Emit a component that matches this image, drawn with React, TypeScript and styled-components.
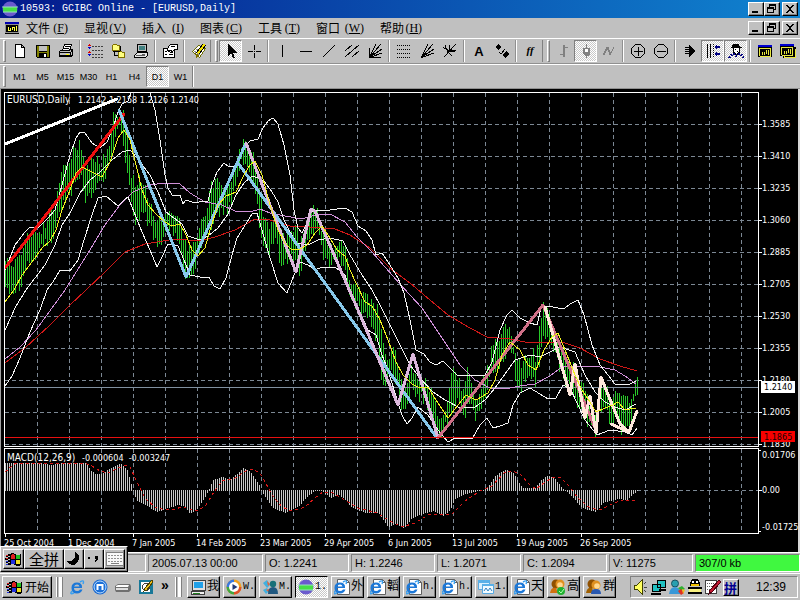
import React from 'react';
import styled, { createGlobalStyle, css } from 'styled-components';

const face = '#c0c0c0';
const uiFont = '"Liberation Mono", "Noto Sans CJK SC", monospace';
const sansFont = '"Liberation Sans", "Noto Sans CJK SC", sans-serif';
const chartFont = '"DejaVu Sans Condensed", "DejaVu Sans", sans-serif';
const dither = 'conic-gradient(#fff 25%, #c8c8c8 0 50%, #fff 0 75%, #c8c8c8 0) 0 0 / 2px 2px';

const GlobalStyle = createGlobalStyle`
  *, *::before, *::after { box-sizing: border-box; }
  body { margin: 0; background: ${face}; color: #000; }
  button { font: inherit; color: inherit; margin: 0; padding: 0; border: 0; background: none; }
`;

const raised = css`
  border: 1px solid;
  border-color: #fff #000 #000 #fff;
  box-shadow: inset -1px -1px 0 #808080;
`;

const sunken = css`
  border: 1px solid;
  border-color: #808080 #fff #fff #808080;
`;

const Page = styled.div`
  display: flex;
  flex-direction: column;
  min-height: 100vh;
  overflow: hidden;
  background: ${face};
  font: 10px/14px ${uiFont};
`;

const TitleBar = styled.header`
  display: flex;
  align-items: center;
  height: 18px;
  padding: 0 2px;
  color: #fff;
  background: linear-gradient(90deg, #04188c, #1084d0);
`;

const Title = styled.h1`
  flex: 1;
  margin: 0 0 0 2px;
  font: 10px/18px ${uiFont};
  white-space: pre;
`;

const WindowButtons = styled.div`
  display: flex;
  margin-left: auto;
`;

const WindowButton = styled.button<{ $gap?: boolean }>`
  width: 16px;
  height: 14px;
  margin-left: ${p => (p.$gap ? 2 : 0)}px;
  background: ${face};
  ${raised}
  svg { display: block; }
`;

const MenuBar = styled.nav`
  display: flex;
  align-items: center;
  height: 20px;
  padding: 0 2px 0 5px;
`;

const MenuItems = styled.div`
  display: flex;
  gap: 16px;
  margin-left: 7px;
`;

const MenuItem = styled.button`
  display: flex;
  font: 12px/16px "Noto Sans CJK SC", sans-serif;
  white-space: nowrap;
`;

const Key = styled.span<{ $wide: boolean }>`
  width: ${p => (p.$wide ? 24 : 18)}px;
  font-family: "Liberation Serif", serif;
  text-align: right;
`;

const ToolBar = styled.div<{ $height: number }>`
  display: flex;
  align-items: stretch;
  height: ${p => p.$height}px;
  padding: 1px 0 1px 3px;
  border-top: 1px solid #fff;
  border-bottom: 1px solid #909090;
`;

const Grip = styled.div<{ $lead?: boolean }>`
  flex: none;
  width: ${p => (p.$lead ? 9 : 5)}px;
  padding-left: ${p => (p.$lead ? 4 : 0)}px;
  border-left: ${p => (p.$lead ? '1px solid #808080' : '0')};
  &::before {
    content: '';
    display: block;
    width: 3px;
    height: 100%;
    border: 1px solid;
    border-color: #fff #808080 #808080 #fff;
  }
`;

const Divider = styled.div`
  flex: none;
  width: 6px;
  padding-left: 2px;
  &::before {
    content: '';
    display: block;
    width: 2px;
    height: 100%;
    border-left: 1px solid #909090;
    border-right: 1px solid #fff;
  }
`;

const ToolButton = styled.button<{ $pressed?: boolean }>`
  flex: none;
  display: flex;
  align-items: center;
  justify-content: center;
  width: 23px;
  font: 9px/12px ${sansFont};
  border: 1px solid transparent;
  ${p => p.$pressed && css`
    background: ${dither};
    ${sunken}
  `}
`;

const PeriodEnd = styled.div`
  width: 2px;
  border-left: 1px solid #808080;
  border-right: 1px solid #fff;
`;

const ChartPane = styled.main`
  background: #000;
  border-left: 1px solid #a0a0a0;
  border-right: 2px solid #d8d8d8;
  svg { display: block; width: 100%; height: auto; }
`;

const StatusBar = styled.footer`
  position: relative;
  display: grid;
  grid-template-columns: 142px 115px 84px 84px 84px 84px 84px 1fr;
  gap: 2px;
  height: 21px;
  padding: 1px 0 2px 4px;
  border-top: 1px solid #fff;
  margin-top: -1px;
`;

const StatusCell = styled.div<{ $hot?: boolean }>`
  padding-left: 3px;
  font: 11px/16px ${sansFont};
  white-space: nowrap;
  background: ${p => (p.$hot ? '#40f840' : face)};
  ${sunken}
`;

const ImeBar = styled.div`
  position: absolute;
  left: 0;
  bottom: 1px;
  display: flex;
  height: 26px;
  padding: 2px;
  background: ${face};
  ${raised}
`;

const ImeButton = styled.button<{ $w: number }>`
  display: flex;
  align-items: center;
  justify-content: center;
  width: ${p => p.$w}px;
  font: 15px/18px "Noto Sans CJK SC", sans-serif;
  white-space: nowrap;
  ${raised}
`;

const TaskBar = styled.div`
  display: flex;
  align-items: center;
  height: 27px;
  padding: 1px 2px 1px;
  border-top: 1px solid #fff;
`;

const StartButton = styled.button`
  display: flex;
  align-items: center;
  gap: 2px;
  width: 50px;
  height: 22px;
  padding-left: 3px;
  font: 12px/16px "Noto Sans CJK SC", sans-serif;
  white-space: nowrap;
  ${raised}
`;

const TaskGrip = styled.div`
  width: 6px;
  height: 20px;
  margin: 0 3px 0 4px;
  border-left: 1px solid #fff;
  border-right: 3px solid #fff;
  box-shadow: inset 1px 0 0 #808080, 1px 0 0 #808080;
`;

const QuickLaunch = styled.div`
  display: flex;
  align-items: center;
  gap: 7px;
  width: 106px;
  padding-left: 4px;
`;

const More = styled.button`
  align-self: flex-start;
  font: bold 14px/12px ${sansFont};
`;

const Tasks = styled.div`
  display: flex;
  gap: 3px;
  margin-left: 3px;
`;

const TaskButton = styled.button<{ $active?: boolean; $latin: boolean }>`
  display: flex;
  align-items: center;
  gap: 1px;
  width: 33px;
  height: 22px;
  padding-left: 2px;
  overflow: hidden;
  font: ${p => (p.$latin ? '10px' : '12px')}/16px ${uiFont};
  white-space: nowrap;
  svg { flex: none; }
  ${raised}
  ${p => p.$active && css`
    background: ${dither};
    border-color: #000 #fff #fff #000;
    box-shadow: none;
  `}
`;

const Tray = styled.div`
  display: flex;
  align-items: center;
  gap: 2px;
  width: 168px;
  height: 22px;
  margin-left: auto;
  padding-left: 2px;
  ${sunken}
`;

const Clock = styled.time`
  margin-left: auto;
  padding-right: 11px;
  font: 12px/14px ${sansFont};
`;

/* ---------- icons ---------- */

const Ico = ({ children, w = 16, h = 16, smooth }: { children: React.ReactNode; w?: number; h?: number; smooth?: boolean }) => (
  <svg width={w} height={h} viewBox={`0 0 ${w} ${h}`} fill="none" stroke="none" shapeRendering={smooth ? 'auto' : 'crispEdges'} aria-hidden="true">
    {children}
  </svg>
);

const P = ({ d, c = '#000', f }: { d: string; c?: string; f?: string }) => <path d={d} stroke={c} fill={f ?? 'none'} />;

const Globe = () => (
  <Ico smooth>
    <circle cx="8" cy="8" r="7.5" fill="#6a5acd" />
    <path d="M1 6h14v5H1z" fill="#45e045" />
    <path d="M0 6h16M1 11h14" stroke="#9be0c0" />
  </Ico>
);

const ChartDoc = () => (
  <Ico w={14} h={14}>
    <path d="M0 1h14v12H0z" fill="#000" />
    <path d="M0 1h14v2H0z" fill="#0000b0" />
    <path d="M1 3.500h12M1 11.500h12M.5 3v9M13.500 3v9" stroke="#909090" />
    <path d="M3.500 9V6M5.500 10V7M7.500 9V6M9.500 10V6M11.500 10V5M3 9.500h2M8 6.500h2" stroke="#ffff40" />
  </Ico>
);

const Flag = () => (
  <Ico w={17} h={16}>
    <path d="M1 5h2M0 8h3M1 11h2M3 4h2M3 7h2M3 10h2M3 13h2" stroke="#000" strokeWidth="2" />
    <path d="M5 3q3-2 5 0t6 0v11q-3 2-6 0t-5 0z" fill="#000" />
    <path d="M6 4q2-2 4 0v4q-2-1-4 0z" fill="#e02020" />
    <path d="M11 4q2 1 4 0v4q-2 1-4 0z" fill="#20c020" />
    <path d="M6 9q2-1 4 0v4q-2-1-4 0z" fill="#2030e0" />
    <path d="M11 9q2 1 4 0v4q-2 1-4 0z" fill="#f0e020" />
    <path d="M1 4h2M1 7h2" stroke="#e02020" /><path d="M1 10h2M1 13h2" stroke="#2030e0" />
  </Ico>
);

const winIcons: Record<string, React.ReactNode> = {
  min: <Ico w={14} h={12}><path d="M3 8h6v2H3z" fill="#000" /></Ico>,
  restore: <Ico w={14} h={12}><path d="M4 1h7v6H9V6h1V3H5v1H4zM2 4h7v6H2zM3 6v3h5V6z" fill="#000" fillRule="evenodd" /></Ico>,
  close: <Ico w={14} h={12}><path d="M3 2h2v1h1v1h2V3h1V2h2v1h-1v1H9v1H8v2h1v1h1v1h1v1H9V9H8V8H6v1H5v1H3V9h1V8h1V7h1V5H5V4H4V3H3z" fill="#000" /></Ico>,
};

const fan = <path d="M2.5 14.500L14 1M2.500 14.500L15 6M2.500 14.500L9 1M2.500 14.500L15 10" stroke="#000" />;

const I: Record<string, React.ReactNode> = {
  new: <Ico><path d="M3.500 1.500h6l3 3v10h-9zM9.500 1.500v3h3" fill="#fff" stroke="#000" /></Ico>,
  save: <Ico><path d="M1 2h14v13H2l-1-1z" fill="#000" /><path d="M2 3h2v6h8V3h2v11h-2v-4H4v4H2z" fill="#808000" /><path d="M4 3h8v5H4z" fill="#c0c0c0" /><path d="M9 11h2v3H9z" fill="#fff" /></Ico>,
  print: <Ico><path d="M1.500 8.500l3-2h10l-2 3v4h-11z" fill="#c0c0c0" stroke="#000" /><path d="M4.500 7.500l2-6h7l-2 6z" fill="#fff" stroke="#000" /><path d="M7 3.500h5M6 5.500h5M1 9.500h12M1 12.500h11M14.500 7v5l-2 2" stroke="#000" /><path d="M8 11h3v1H8z" fill="#ffff00" /></Ico>,
  market: <Ico><path d="M5 3.500h11M5 7.500h11M5 11.500h11M5 14.500h11" stroke="#404040" strokeDasharray="2 1" /><path d="M2 1h1v1h1v1H1V2h1zM2 8h1v1h1v1H1V9h1z" fill="#e00000" /><path d="M1 4h3v1H3v1H2V5H1zM1 11h3v1H3v1H2v-1H1z" fill="#0000d0" /></Ico>,
  nav: <Ico><path d="M2.500 2.500l1-1h3l1 1h2v5h-7zM8.500 9.500l1-1h2l1 1h2v5h-6z" fill="#ffff80" stroke="#807000" /><path d="M4.500 8v4.500H8M10 7.500V3M3 8.500h7" stroke="#000" /></Ico>,
  terminal: <Ico><path d="M4.500 1.500h9v7h-9z" fill="#c0c0c0" stroke="#000" /><path d="M6 3h6v4H6z" fill="#408080" /><path d="M1.500 12.500l3-3h10v3l-2 2h-11z" fill="#e8e8e8" stroke="#000" /><path d="M3 12.500h9M9 11.500h3" stroke="#606060" /></Ico>,
  props: <Ico><path d="M1.500 5.500h11v9h-11z" fill="#fff" stroke="#000" /><path d="M6.500 3.500l2-2h7v5h-3l-2 2-2-1-2 1-1-2z" fill="#fff" stroke="#000" /><path d="M3 8.500h2M3 11.500h2M7 11.500h4M8 9.500h3M9 3.500h4" stroke="#000" /></Ico>,
  wand: <Ico><path d="M1.500 8.500l6-6 7 3-6 9z" fill="#fff" stroke="#707000" /><path d="M3 8l6 4M5 6l6 3" stroke="#909090" /><path d="M15 2L8 11M12 1L5 10" stroke="#000" /><path d="M13.500 1.500l-7 9" stroke="#f0e000" strokeWidth="2" /><path d="M5 11l3 1-3 3z" fill="#807000" /></Ico>,
  cursor: <Ico><path d="M5 1v12l3-3 2 5h2l-2-5h4z" fill="#000" /></Ico>,
  cross: <Ico><path d="M8.500 2v5M8.500 10v5M2 8.500h5M10 8.500h5" stroke="#000" /><path d="M8 8h1v1H8z" fill="#000" /></Ico>,
  vline: <Ico><P d="M7.500 2v12" /></Ico>,
  hline: <Ico><P d="M2 8.500h12" /></Ico>,
  trend: <Ico><P d="M2 14L14 2" /></Ico>,
  channel: <Ico><P d="M1 8l7-6M1 14L15 2M8 14l7-6" /></Ico>,
  fan: <Ico>{fan}<P d="M3 14.500h11M2.500 14V5" /></Ico>,
  fibo: <Ico>{[2, 6, 10, 14].map(y => <path key={y} d={`M1 ${y}.500h14`} stroke="#000" strokeDasharray="1 1" />)}</Ico>,
  gann: <Ico>{fan}</Ico>,
  fork: <Ico><P d="M2 14L14 1M1 4q4 4 12 5M3 2q1 6 7 11M7 2v5h7" /></Ico>,
  text: <Ico smooth><text x="8" y="13" textAnchor="middle" fontSize="13" fontWeight="bold" fontFamily="Liberation Sans, sans-serif" fill="#000">A</text></Ico>,
  arrows: <Ico><path d="M4 1l3 3-3 3-3-3zM12 8l3 3-4 4-3-3z" fill="#000" /><P d="M5 9l2 2 4-5" /></Ico>,
  ff: <Ico smooth><text x="7" y="11" textAnchor="middle" fontSize="11" fontStyle="italic" fontWeight="bold" fontFamily="Liberation Serif, serif" fill="#000">ff</text></Ico>,
  bars: <Ico><path d="M8 2h2v12H8zM10 4h3v1h-3zM5 11h3v1H5z" fill="#808080" /></Ico>,
  candle: <Ico><path d="M8 1h1v14H8z" fill="#808080" /><path d="M5 5h7v6l-2 2H7l-2-2z" fill="#808080" /><path d="M7 6h3v3H7z" fill="#fff" /></Ico>,
  line: <Ico><P c="#808080" d="M2 12l4-8 3 8 4-8M3 12l4-8 3 8" /></Ico>,
  zoomin: <Ico><P d="M5.500 1.500h5l4 4v5l-4 4h-5l-4-4v-5zM4 8.500h9M8.500 4v9" /></Ico>,
  zoomout: <Ico><P d="M5.500 1.500h5l4 4v5l-4 4h-5l-4-4v-5zM4 8.500h9" /></Ico>,
  scroll: <Ico><path d="M7 2l7 6-7 6z" fill="#000" /><P d="M3 4.500h4M3 6.500h4M3 8.500h4M3 10.500h4" /></Ico>,
  shift: <Ico><P d="M2.500 1v14M5.500 1v14" /><path d="M8.500 1v14" stroke="#000" strokeDasharray="1 1" /><path d="M9 4l3-3v2h3v2h-3v2zM9 11l3-3v2h3v2h-3v2z" fill="#000080" /></Ico>,
  expert: <Ico><path d="M5 1h6l1 3h2v1H3V4h1z" fill="#000" /><path d="M5.500 5v4l2 2h2l2-2V5" fill="#fff" stroke="#000" /><path d="M7 6h1v1H7zM9 8h1v1H9z" fill="#000" /><path d="M1 15l2-3 3-1 2 2 3-2 3 1 2 3" stroke="#000080" strokeWidth="2" strokeDasharray="2 1" /></Ico>,
  win: <Ico w={14} h={14}><path d="M0 1h14v12H0z" fill="#000" /><path d="M0 1h14v2H0z" fill="#0000d0" /><P c="#e8e840" d="M1.500 12V4.500h11v7.500h-11M4.500 11V8M6.500 8v3M8.500 6v4M10.500 6v5" /></Ico>,
  wins: <Ico w={16}><path d="M3 4h13v11H3z" fill="#000" /><path d="M4.500 5v9h11V6" stroke="#e8e840" /><path d="M0 1h14v12H0z" fill="#000" /><path d="M0 1h14v2H0z" fill="#0000d0" /><P c="#e8e840" d="M1.500 12V4.500h11v7.500h-11M4.500 11V8M6.500 8v3M8.500 6v4M10.500 6v5" /></Ico>,
};

const IeLetter = () => (
  <>
    <path d="M13 9H5q0 3 3 3 2 0 3-1.500h2.500Q12 14.500 8 14.500q-5.500 0-5.500-5.500T8 3.500q5.500 0 5 5.500M5 7.500h5.500Q10 5.500 8 5.500t-3 2" fill="#1c78d8" fillRule="evenodd" />
    <path d="M3 12q-3 4 2 2M11 3q5-3 3 2" stroke="#3aa0f0" strokeWidth="1.500" />
  </>
);

const T: Record<string, React.ReactNode> = {
  ie: <Ico smooth><IeLetter /></Ico>,
  m: <Ico smooth><circle cx="8" cy="8" r="7.500" fill="#1868d0" /><circle cx="8" cy="8" r="6" stroke="#bfe0ff" fill="#1c70d8" /><path d="M5.500 11V6h5v5M8 6" stroke="#fff" strokeWidth="2" /></Ico>,
  drive: <Ico smooth><path d="M0 7l3-2h12l1 2v4l-2 2H1l-1-2z" fill="#707070" /><path d="M1 7l2-1h11l-1 2H1z" fill="#fff" /><path d="M1 9h12v2H1z" fill="#e0e0e0" /></Ico>,
  note: <Ico><path d="M1 1h14v14H1z" fill="#187898" /><path d="M3 3h9v10H3z" fill="#fff" /><circle cx="8" cy="8" r="3.500" stroke="#404040" /><path d="M14 1L7 9l-1 3 3-1 6-8z" fill="#e8c020" stroke="#504000" /></Ico>,
  pc: <Ico><path d="M2 1h13v10H2z" fill="#e0e0e0" stroke="#404040" /><path d="M4 3h9v6H4z" fill="#20a0e8" /><path d="M1 12h13v3H1z" fill="#f0f0f0" stroke="#404040" /><path d="M3 14h7" stroke="#208020" /></Ico>,
  media: <Ico smooth><circle cx="8" cy="8" r="7.500" fill="#f0a020" /><path d="M8 .5A7.500 7.500 0 0 0 .5 8H8z" fill="#3878e0" /><path d="M.5 8A7.500 7.500 0 0 0 8 15.500V8z" fill="#40a840" /><path d="M8 15.500A7.500 7.500 0 0 0 15.500 8H8z" fill="#e05028" /><circle cx="8" cy="8" r="5" fill="#fff" /><path d="M6.500 5l5 3-5 3z" fill="#203878" /></Ico>,
  msn: <Ico smooth><path d="M1 4l4-3 3 5-3 3zM1 11l4-2 2 3-3 3z" fill="#40b0e0" /><path d="M5 2l3 3-2 2zM4 11l3-1 1 4z" fill="#f06030" /><circle cx="11" cy="5" r="3.200" fill="#187078" /><path d="M6 15q0-7 5-7t5 7z" fill="#205880" /></Ico>,
  globe: <Globe />,
  page: <Ico smooth><path d="M3.500.500h9l3 3v12h-12z" fill="#fff" stroke="#606060" /><path d="M12.500.500v3h3" stroke="#606060" /><g transform="translate(-2 0)"><IeLetter /></g></Ico>,
  windows: <Ico smooth><path d="M.5 1.500h11v9H.5z" fill="#d8f0ff" stroke="#58a8e0" /><path d="M0 1h12v3H0z" fill="#58b0e8" /><path d="M4.500 5.500h11v9h-11z" fill="#f0faff" stroke="#58a8e0" /><path d="M4 5h12v2H4z" fill="#58b0e8" /><path d="M6 12l2-3 2 3 2-3 2 3" stroke="#3080c0" /></Ico>,
  users: <Ico smooth><circle cx="6" cy="5" r="4.500" fill="#905000" /><circle cx="10" cy="6" r="4.500" fill="#e09020" /><circle cx="11" cy="7" r="2.800" fill="#ffd890" /><path d="M0 14q1-6 6-5l2 5z" fill="#a06000" /><path d="M5 15q0-5 5-5t5 5z" fill="#2858b0" /></Ico>,
  usersOn: <Ico smooth><circle cx="6" cy="5" r="4.500" fill="#905000" /><circle cx="10" cy="5" r="4.500" fill="#e09020" /><circle cx="10" cy="6" r="2.800" fill="#ffd890" /><path d="M0 14q1-6 6-5l2 5z" fill="#d07010" /><circle cx="11" cy="12" r="4" fill="#20b030" /><path d="M9 12l2 2 3-4" stroke="#b0ffb0" /></Ico>,
  sound: <Ico><path d="M1 6h3l5-5v14l-5-5H1z" fill="#ffff60" stroke="#404000" /><path d="M11 5l2-2M11 8.500h3M11 11l2 2" stroke="#404040" /></Ico>,
  net: <Ico><path d="M6.500 1.500h8v7h-8zM1.500 5.500h8v7h-8z" fill="#20c0c0" stroke="#000" /><path d="M0 14.500h10M8 10.500h7" stroke="#000" strokeWidth="2" /></Ico>,
  buddy: <Ico smooth><circle cx="6" cy="4.500" r="3.500" fill="#28a0b0" stroke="#185060" /><path d="M0 15q1-7 6-7t6 7z" fill="#3898d8" /><path d="M9 9l4-2 3 3-4 2z" fill="#30b030" /><path d="M9 12l3-2 3 4-3 2z" fill="#e03020" /><path d="M13 10l3 1-2 4z" fill="#f0c020" /></Ico>,
  penguin: <Ico><path d="M5 0h6l2 4v3H3V4z" fill="#000" /><path d="M5 2h2v2H5zM9 2h2v2H9z" fill="#fff" /><path d="M4 5h8v2H4z" fill="#f0c000" /><path d="M1 8h14v2H1zM1 13h14v2H1z" fill="#000" /><path d="M2 10h12v3H2z" fill="#f8f080" /></Ico>,
  pad: <Ico><path d="M.5 1.500h11v13H.5z" fill="#fff" stroke="#404040" /><path d="M2 4.500h8M2 7.500h7M2 10.500h5" stroke="#606060" strokeDasharray="1 1" /><path d="M14 1l2 2-9 10-3 2 1-4z" fill="#c01830" stroke="#500010" /></Ico>,
  moon: <Ico><path d="M9 1q5 2 4 7t-6 6q-4 0-6-4 5 1 7-2t1-7" fill="#000" /></Ico>,
  dots: <Ico><path d="M2 6h2v2H2zM9 5h3v3l-2 3H9l1-3H9z" fill="#000" /></Ico>,
  keys: <Ico w={18} h={14}><path d="M.5.500h17v13H.5z" fill="#f8f8f8" stroke="#808080" />{[3, 6, 9].map(y => <path key={y} d={`M2 ${y}.500h14`} stroke="#909090" strokeDasharray="2 1" />)}<path d="M5 11.500h8" stroke="#808080" /></Ico>,
};

/* ---------- chart data, in canvas units ---------- */

type Pt = [number, number];
const pts = (s: string): Pt[] => s.trim().split(/\s+/).map(p => p.split(',').map(Number) as Pt);
const at = (list: Pt[], x: number) => {
  const i = Math.max(1, list.findIndex(p => p[0] >= x));
  const [a, b] = [list[i - 1], list[i]];
  return a[1] + ((b[1] - a[1]) * (x - a[0])) / (b[0] - a[0]);
};

const highs = pts(`5,262 12,262 20,256 28,236 36,230 44,226 52,212 58,192 62,172 68,168 75,147 80,146 85,170 93,156 100,165
  108,145 113,118 118,111 122,112 126,122 130,170 134,184 140,178 145,182 150,208 157,220 163,220 168,208 174,212 180,222
  186,248 192,250 198,230 205,214 210,186 216,182 222,186 230,185 235,166 240,146 246,142 252,156 256,162 260,200 268,228
  275,222 282,236 290,232 296,226 300,242 306,226 312,206 318,214 325,240 332,246 340,236 345,246 350,286 357,285 362,296
  370,300 378,306 382,344 388,356 394,350 400,374 405,386 412,366 418,378 426,380 432,396 438,418 444,408 449,392 452,362
  458,382 464,388 468,368 475,394 478,398 484,372 488,366 492,344 500,334 507,325 512,336 517,366 524,360 530,350 535,356
  540,326 543,308 547,310 553,326 560,346 567,360 574,366 580,382 590,402 595,410 600,376 605,386 611,396 616,390 620,402
  626,400 630,398 633,388 637,382`);
const lows = pts(`5,287 12,292 20,290 28,264 36,254 44,246 52,236 58,222 62,205 68,194 75,186 80,170 85,203 93,194 100,184
  108,168 113,148 118,130 122,134 126,164 130,200 134,224 140,214 145,216 150,230 157,244 163,236 168,226 174,236 180,252
  186,282 192,276 198,252 205,236 210,230 216,208 222,214 230,206 235,188 240,164 246,166 252,182 256,190 260,236 268,250
  275,244 282,266 290,256 296,262 300,274 306,246 312,228 318,236 325,262 332,262 340,260 345,276 350,304 357,304 362,314
  370,320 378,344 382,386 388,376 394,374 400,404 405,410 412,386 418,396 426,402 432,416 438,437 444,430 449,418 452,404
  458,402 464,420 468,396 475,420 478,412 484,396 488,386 492,372 500,364 507,348 512,352 517,390 524,384 530,372 535,384
  540,360 543,334 547,332 553,348 560,370 567,386 574,392 580,412 590,426 595,432 600,406 605,404 611,426 616,408 620,432
  626,424 630,430 633,406 637,394`);

const upperBand = '5,270 15,245 25,232 30,227 38,228 48,218 55,210 62,185 70,155 76,138 80,132 85,133 92,143 100,148 107,142 113,128 118,112 122,104 128,101 132,90 148,86 155,110 160,140 165,175 168,188 172,195 180,195 183,204 186,200 192,202 196,203 202,201 208,201 212,185 217,172 224,163 229,167 235,166 243,148 250,141 258,139 263,128 268,121 273,118 278,124 284,145 290,175 294,210 298,228 302,233 306,225 310,213 315,210 330,210 345,208 352,212 358,226 366,231 372,240 376,255 382,253 390,265 398,278 404,293 410,320 416,350 424,354 430,362 436,365 443,361 450,368 458,376 470,375 485,375 492,362 500,330 507,315 512,310 520,318 530,323 537,325 541,308 548,306 558,308 565,308 570,304 578,300 584,315 592,345 600,365 608,375 615,384 628,385 636,381';
const middleBand = '5,330 16,306 26,290 35,278 45,265 55,245 62,225 70,213 80,193 90,180 100,172 112,160 122,152 130,150 137,158 150,175 158,192 166,212 174,218 182,224 188,236 200,240 208,236 218,228 228,214 236,195 244,183 252,176 258,178 264,181 272,192 278,202 284,220 290,232 297,243 308,245 318,240 330,238 343,241 350,255 362,275 372,290 380,305 390,325 400,345 410,365 420,378 433,392 445,400 460,408 475,407 485,400 495,388 505,374 515,360 530,355 540,357 550,352 560,347 575,352 585,375 595,392 605,402 615,407 625,410 636,404';
const lowerBand = '5,386 12,376 20,358 30,332 40,310 47,290 53,282 60,270 70,271 78,260 84,240 92,215 98,198 106,196 112,201 118,206 124,200 128,197 134,212 142,232 150,250 157,267 163,255 168,244 178,246 184,260 190,275 200,277 209,277 214,286 220,289 226,278 232,255 237,238 244,227 252,214 257,213 262,230 270,258 278,283 287,293 294,275 300,262 308,265 315,270 322,267 335,267 345,275 350,292 358,308 368,330 376,335 382,355 388,370 398,403 402,415 407,424 412,418 418,407 428,415 438,430 448,442 455,438 472,439 480,425 487,418 493,428 500,426 508,423 513,405 520,393 530,388 540,394 548,399 556,398 563,385 570,388 578,405 585,420 597,435 610,430 625,432 632,435 637,428';
const fastAverage = '5,302 14,290 22,275 32,262 42,248 50,241 56,230 62,210 70,190 76,173 82,167 92,172 102,177 110,162 118,138 124,130 130,140 136,165 142,190 148,205 156,214 165,222 172,226 180,224 186,235 192,250 198,256 205,248 210,230 218,205 226,196 236,192 244,175 250,165 255,161 262,175 270,205 278,230 285,243 292,250 300,249 307,245 315,233 322,226 330,238 337,250 345,256 350,270 357,285 365,302 372,306 380,320 388,340 396,362 403,375 412,384 420,388 428,387 436,400 448,418 458,405 466,395 476,400 488,393 495,380 502,355 510,342 520,350 528,365 536,370 544,350 552,337 558,333 565,350 575,375 582,390 590,402 596,412 605,408 613,405 618,402 625,410 636,408';
const slowAverage = '5,359 20,347 36,330 52,308 65,290 85,258 105,225 120,205 133,192 150,185 165,183 180,184 190,193 205,202 222,205 235,211 250,212 260,209 270,213 285,216 302,219 315,215 330,214 345,222 357,237 372,252 385,267 400,284 410,295 422,308 440,335 460,365 475,380 490,388 505,389 520,386 535,384 550,376 562,367 575,366 600,367 615,370 625,376 636,384';
const longAverage = '5,363 25,348 50,325 70,305 86,290 105,272 125,252 145,244 175,239 200,241 215,237 235,230 255,219 270,220 290,226 310,227 335,229 350,235 370,248 390,268 410,283 430,300 448,315 470,328 487,337 510,339 525,342 545,342 565,343 580,348 600,359 620,366 637,371';

const thinLines: [string, string][] = [
  [longAverage, '#d01818'], [slowAverage, '#d090d8'], [upperBand, '#f4f4f4'],
  [middleBand, '#f4f4f4'], [lowerBand, '#f4f4f4'],
];
const thickLines: [string, string][] = [
  ['5,144 117,99', '#ffffff'],
  ['5,268 124,114', '#f01010'],
  ['119,110 186,277 246,143', '#87c8eb'],
  ['238,163 437,438', '#87c8eb'],
  ['246,143 296,272 311,209 315,211 358,310 398,405 413,354 438,438', '#dcb8dc'],
  ['438,438 543,305 596,430', '#d07088'],
  ['545,307 570,395 575,364 585,418 590,396 596,433 601,377 620,424 629,432 637,411', '#ffe8dc'],
  ['611,424 629,432', '#ffe8dc'],
];

const macd = pts(`5,463 40,463 50,465 62,463 86,463 90,470 95,474 102,474 110,468 120,463 127,470 132,488 136,500 143,504 150,508
  157,512 165,509 178,505 184,506 190,514 198,508 206,495 213,480 222,477 230,480 243,468 250,471 258,483 262,492 272,508
  285,513 298,507 306,498 314,491 322,491 330,498 338,494 345,500 352,508 365,513 378,513 388,527 396,524 404,528 412,518
  425,513 433,511 443,516 450,510 454,500 465,494 475,492 486,489 495,476 506,469 513,473 522,488 535,488 541,480 548,475
  555,479 563,489 570,495 582,508 595,512 603,503 617,499 627,500 633,494 637,491`);
const macdSignal = '5,472 12,466 16,463 84,463 92,466 100,471 108,473 125,465 130,467 136,480 145,498 155,507 165,510 175,509 182,507 190,509 198,511 206,505 214,492 222,481 235,478 246,471 254,469 262,476 272,495 282,507 292,511 305,507 315,498 323,492 333,493 345,500 358,508 377,513 390,521 402,527 415,523 428,515 440,514 452,514 465,501 480,491 492,486 504,473 513,471 520,474 530,485 536,489 545,482 552,478 560,477 568,485 578,498 590,508 600,510 612,504 622,500 637,500';

const barXs = Array.from({ length: 317 }, (_, i) => 5 + i * 2);
const noise = (n: number) => {
  const v = Math.sin(n * 12.9898) * 43758.5453;
  return Math.round((v - Math.floor(v) - 0.5) * 13);
};
const barPath = barXs.map(x => {
  const top = Math.round(at(highs, x)) + noise(x);
  const bottom = Math.round(at(lows, x)) + noise(x + 0.4);
  const y = Math.max(106, top);
  return `M${x} ${y}h1V${Math.max(top + 6, Math.min(438, bottom))}h-1z`;
}).join('');
const macdPath = barXs.map(x => {
  const y = Math.round(at(macd, x));
  return y <= 490 ? `M${x + 0.5} ${y}V491` : `M${x + 0.5} 490V${y}`;
}).join('');

const gridX = Array.from({ length: 23 }, (_, i) => 37 + i * 32);
const prices = ['1.3585', '1.3410', '1.3235', '1.3060', '1.2885', '1.2705', '1.2530', '1.2355', '1.2180', '1.2005', '1.1830'];
const dates = ['25 Oct 2004', '1 Dec 2004', '7 Jan 2005', '14 Feb 2005', '23 Mar 2005', '29 Apr 2005', '6 Jun 2005', '13 Jul 2005', '19 Aug 2005', '26 Sep 2005'];

const ChartText = styled.text<{ $ink?: string; $name?: boolean }>`
  font: ${p => (p.$name ? 10 : 9)}px ${chartFont};
  fill: ${p => p.$ink ?? '#fff'};
  white-space: pre;
`;

const Chart = () => (
  <svg viewBox="1 89 797 464" shapeRendering="crispEdges" fill="none" role="img" aria-label="EURUSD daily">
    <clipPath id="plot"><rect x="5" y="93" width="753" height="353" /></clipPath>
    <g stroke="#7c8894" strokeDasharray="4 3">
      {gridX.map(x => <path key={x} d={`M${x}.500 93V446M${x}.500 449V532`} />)}
      {prices.map((p, i) => <path key={p} d={`M5 ${124 + i * 32}.500H758`} />)}
      <path d="M637 490.500H758" />
    </g>
    <g clipPath="url(#plot)">
      <path d={barPath} fill="#28c828" />
      <rect x="5" y="387" width="753" height="1" fill="#8090a0" />
      {thinLines.map(([p, c], i) => <polyline key={i} points={p} stroke={c} />)}
      {thickLines.map(([p, c], i) => <polyline key={i} points={p} stroke={c} strokeWidth="3" strokeLinejoin="round" strokeLinecap="round" />)}
      <polyline points={fastAverage} stroke="#f0f020" />
      <rect x="5" y="437" width="753" height="1" fill="#e81010" />
    </g>
    <path d={macdPath} stroke="#c8c8c8" />
    <polyline points={macdSignal} stroke="#d81818" strokeDasharray="3 3" />
    <path d="M4.500 446.500V92.500H758.500V446.500H4.500M4.500 533.500V448.500H758.500V533.500H4.500" stroke="#fff" />
    {prices.map((p, i) => (
      <g key={p}>
        <path d={`M759 ${124 + i * 32}.500h3`} stroke="#fff" />
        <ChartText x="762" y={127 + i * 32}>{p}</ChartText>
      </g>
    ))}
    <path d="M759 490.500h3M759 450.500h2M759 531.500h2" stroke="#fff" />
    <ChartText x="762" y="458">0.01706</ChartText>
    <ChartText x="762" y="493">0.00</ChartText>
    <ChartText x="762" y="530">-0.01725</ChartText>
    <rect x="761" y="381" width="34" height="12" fill="#fff" />
    <ChartText x="764" y="390" $ink="#000">1.2140</ChartText>
    <rect x="761" y="431" width="34" height="11" fill="#f80000" />
    <ChartText x="764" y="440" $ink="#200">1.1865</ChartText>
    {dates.map((d, i) => (
      <g key={d}>
        <path d={`M${5 + i * 64}.500 534v3`} stroke="#fff" />
        <ChartText x={4 + i * 64} y="546">{d}</ChartText>
      </g>
    ))}
    <ChartText $name x="7" y="103">EURUSD,Daily</ChartText>
    <ChartText x="78" y="103">1.2142 1.2158 1.2126 1.2140</ChartText>
    <ChartText $name x="7" y="461">MACD(12,26,9)</ChartText>
    <ChartText x="82" y="461">-0.000604  -0.003247</ChartText>
  </svg>
);

/* ---------- page ---------- */

const menus: [string, string][] = [['文件', 'F'], ['显视', 'V'], ['插入', 'I'], ['图表', 'C'], ['工具', 'T'], ['窗口', 'W'], ['帮助', 'H']];
const tools = 'new save print | market nav terminal | props | wand # *cursor cross | vline hline trend channel fan | fibo gann fork | text arrows | ff # bars *candle line | zoomin zoomout | scroll *shift *expert | win wins'.split(' ');
const periods = ['M1', 'M5', 'M15', 'M30', 'H1', 'H4', 'D1', 'W1'];
const quotes = ['2005.07.13 00:00', 'O: 1.2241', 'H: 1.2246', 'L: 1.2071', 'C: 1.2094', 'V: 11275'];
const tasks: [string, string][] = [['pc', '我'], ['media', 'W.'], ['msn', 'M.'], ['globe', '1.'], ['page', '外'], ['page', '韜'], ['page', 'h.'], ['page', 'h.'], ['windows', '1.'], ['page', '天'], ['usersOn', '高'], ['users', '群']];

const ImeMark = styled.span`
  width: 16px;
  color: #000090;
  font: bold 13px/15px "Noto Sans CJK SC", sans-serif;
  overflow: hidden;
  ${raised}
`;

const Controls = () => (
  <WindowButtons>
    <WindowButton aria-label="Minimize">{winIcons.min}</WindowButton>
    <WindowButton aria-label="Restore">{winIcons.restore}</WindowButton>
    <WindowButton $gap aria-label="Close">{winIcons.close}</WindowButton>
  </WindowButtons>
);

export default function App() {
  return (
    <Page>
      <GlobalStyle />
      <TitleBar>
        <Globe />
        <Title>10593: GCIBC Online - [EURUSD,Daily]</Title>
        <Controls />
      </TitleBar>
      <MenuBar>
        <ChartDoc />
        <MenuItems>
          {menus.map(([name, key]) => (
            <MenuItem key={key}>{name}<Key $wide={key === 'W'}>(<u>{key}</u>)</Key></MenuItem>
          ))}
        </MenuItems>
        <Controls />
      </MenuBar>
      <ToolBar $height={26}>
        <Grip />
        {tools.map((t, i) => {
          if (t === '|') return <Divider key={i} />;
          if (t === '#') return <Grip key={i} $lead />;
          const name = t.replace('*', '');
          return <ToolButton key={i} $pressed={t !== name} aria-label={name}>{I[name]}</ToolButton>;
        })}
      </ToolBar>
      <ToolBar $height={25}>
        <Grip />
        {periods.map(p => <ToolButton key={p} $pressed={p === 'D1'}>{p}</ToolButton>)}
        <PeriodEnd />
      </ToolBar>
      <ChartPane><Chart /></ChartPane>
      <StatusBar>
        <StatusCell />
        {quotes.map(q => <StatusCell key={q}>{q}</StatusCell>)}
        <StatusCell $hot>307/0 kb</StatusCell>
        <ImeBar>
          <ImeButton $w={21} aria-label="Language"><Flag /></ImeButton>
          <ImeButton $w={40}>全拼</ImeButton>
          <ImeButton $w={20} aria-label="Half width">{T.moon}</ImeButton>
          <ImeButton $w={20} aria-label="Punctuation">{T.dots}</ImeButton>
          <ImeButton $w={21} aria-label="Keyboard">{T.keys}</ImeButton>
        </ImeBar>
      </StatusBar>
      <TaskBar>
        <StartButton><Flag />开始</StartButton>
        <TaskGrip />
        <QuickLaunch>
          {T.ie}{T.m}{T.drive}{T.note}
          <More>»</More>
        </QuickLaunch>
        <TaskGrip />
        <Tasks>
          {tasks.map(([icon, label], i) => (
            <TaskButton key={i} $active={icon === 'globe'} $latin={label.length > 1}>{T[icon]}{label}</TaskButton>
          ))}
        </Tasks>
        <Tray>
          {T.sound}{T.net}{T.buddy}{T.penguin}{T.pad}
          <ImeMark>拼</ImeMark>
          <Clock>12:39</Clock>
        </Tray>
      </TaskBar>
    </Page>
  );
}
